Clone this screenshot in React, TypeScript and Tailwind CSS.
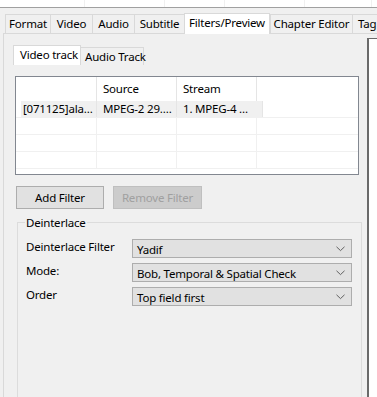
import React from 'react';

const topCells = [85, 80, 60, 80, 67];

const tabs = [
  { label: 'Format', w: 45 },
  { label: 'Video', w: 42 },
  { label: 'Audio', w: 42 },
  { label: 'Subtitle', w: 50 },
  { label: 'Filters/Preview', w: 86, active: true },
  { label: 'Chapter Editor', w: 82 },
  { label: 'Tag', w: 40, left: true },
];

function Chevron() {
  return (
    <svg width="9" height="6" viewBox="0 0 9 6" className="shrink-0">
      <polyline points="0.5,0.8 4.5,4.6 8.5,0.8" fill="none" stroke="#606060" strokeWidth="1" />
    </svg>
  );
}

function Combo({ value }: { value: string }) {
  return (
    <div className="w-[220px] h-[19px] shrink-0 bg-[#e1e1e1] border border-[#adadad] flex items-center justify-between pl-[4px] pr-[6px]">
      <span className="leading-none pt-[2px]">{value}</span>
      <Chevron />
    </div>
  );
}

function Row({ label, value }: { label: string; value: string }) {
  return (
    <div className="flex items-center">
      <div className="w-[114px] shrink-0 pl-[8px] leading-none -mt-[4px]">{label}</div>
      <Combo value={value} />
    </div>
  );
}

function TrackList() {
  const cols = [81, 80, 80];
  return (
    <div className="ml-[11px] mt-[11px] w-[344px] h-[99px] border border-[#828790] bg-white overflow-hidden">
      <div className="flex h-[24px]">
        {['', 'Source', 'Stream'].map((h, i) => (
          <div
            key={i}
            style={{ width: cols[i] }}
            className="shrink-0 border-r border-[#e5e5e5] flex items-center pl-[6px] leading-none"
          >
            {h}
          </div>
        ))}
      </div>
      <div className="flex h-[17px] border-b border-[#f0f0f0]">
        <div className="w-[5px] shrink-0" />
        <div className="w-[241px] shrink-0 bg-[#f0f0f0] flex items-center leading-none">
          <span className="w-[76px] shrink-0 pl-[2px] border-r border-[#e5e5e5] h-full flex items-center">[071125]ala…</span>
          <span className="w-[80px] shrink-0 pl-[6px] border-r border-[#e5e5e5] h-full flex items-center">MPEG-2 29.…</span>
          <span className="w-[80px] shrink-0 pl-[6px] h-full flex items-center">1. MPEG-4 …</span>
        </div>
        <div className="border-l border-[#e5e5e5]" />
      </div>
      {[0, 1, 2].map((r) => (
        <div key={r} className="flex h-[17px] border-b border-[#f0f0f0]">
          <div className="w-[81px] shrink-0 border-r border-[#f0f0f0]" />
          <div className="w-[80px] shrink-0 border-r border-[#f0f0f0]" />
          <div className="w-[80px] shrink-0 border-r border-[#f0f0f0]" />
        </div>
      ))}
    </div>
  );
}

export default function App() {
  return (
    <div className="w-[377px] h-[397px] bg-[#f0f0f0] overflow-hidden whitespace-nowrap text-[11.5px] tracking-[-0.2px] text-black font-['Noto_Sans','Liberation_Sans',sans-serif]">
      {/* strip of the list above */}
      <div className="h-[8px] bg-white border-b border-[#a0a0a0] flex">
        {topCells.map((w, i) => (
          <div key={i} style={{ width: w }} className="border-r border-[#f0f0f0] shrink-0" />
        ))}
      </div>

      {/* main tabs */}
      <div className="mt-[5px] h-[20px] pl-[5px] flex items-end">
        {tabs.map((t) =>
          t.active ? (
            <div
              key={t.label}
              style={{ width: t.w }}
              className="relative z-10 h-[21px] -mb-[1px] shrink-0 bg-white border border-b-0 border-[#d9d9d9] flex items-center justify-center leading-none pb-[2px]"
            >
              {t.label}
            </div>
          ) : t.left ? (
            <div
              key={t.label}
              style={{ width: t.w }}
              className="h-[19px] shrink-0 bg-[#f0f0f0] border-t border-l border-[#d9d9d9] flex items-center pl-[5px] leading-none"
            >
              {t.label}
            </div>
          ) : (
            <div
              key={t.label}
              style={{ width: t.w }}
              className="h-[19px] shrink-0 bg-[#f0f0f0] border-t border-l border-[#d9d9d9] flex items-center justify-center leading-none"
            >
              {t.label}
            </div>
          )
        )}
      </div>

      {/* tab page */}
      <div className="ml-[3px] h-[364px] border-l border-t border-[#d9d9d9] flex">
        <div className="w-[363px] shrink-0">
          {/* inner tabs */}
          <div className="mt-[11px] ml-[9px] h-[20px] flex items-end">
            <div className="w-[68px] h-[20px] shrink-0 bg-white border border-b-0 border-[#d9d9d9] flex items-center pl-[6px] leading-none pb-[1px]">
              Video track
            </div>
            <div className="w-[63px] h-[18px] shrink-0 bg-[#f0f0f0] border-t border-r border-[#d9d9d9] flex items-center pl-[4px] leading-none">
              Audio Track
            </div>
          </div>

          <TrackList />

          {/* buttons */}
          <div className="mt-[11px] ml-[12px] flex gap-[9px]">
            <div className="w-[88px] h-[23px] bg-[#e1e1e1] border border-[#adadad] flex items-center justify-center leading-none">
              Add Filter
            </div>
            <div className="w-[89px] h-[23px] bg-[#cccccc] border border-[#bfbfbf] text-[#a0a0a0] flex items-center justify-center leading-none">
              Remove Filter
            </div>
          </div>

          {/* group box */}
          <div className="mt-[6px] ml-[13px] w-[345px]">
            <div className="flex items-center h-[15px]">
              <div className="w-[8px] border-t border-[#dcdcdc]" />
              <span className="px-[1px] leading-none">Deinterlace</span>
              <div className="flex-1 border-t border-[#dcdcdc]" />
            </div>
            <div className="-mt-[8px] h-[200px] border-l border-r border-[#dcdcdc] pt-[17px] flex flex-col gap-[5px]">
              <Row label="Deinterlace Filter" value="Yadif" />
              <Row label="Mode:" value="Bob, Temporal & Spatial Check" />
              <Row label="Order" value="Top field first" />
            </div>
          </div>
        </div>

        {/* edge of the preview frame */}
        <div className="mt-[4px] flex-1 bg-white border-l-2 border-t border-[#6a6a6a]" />
      </div>
    </div>
  );
}
